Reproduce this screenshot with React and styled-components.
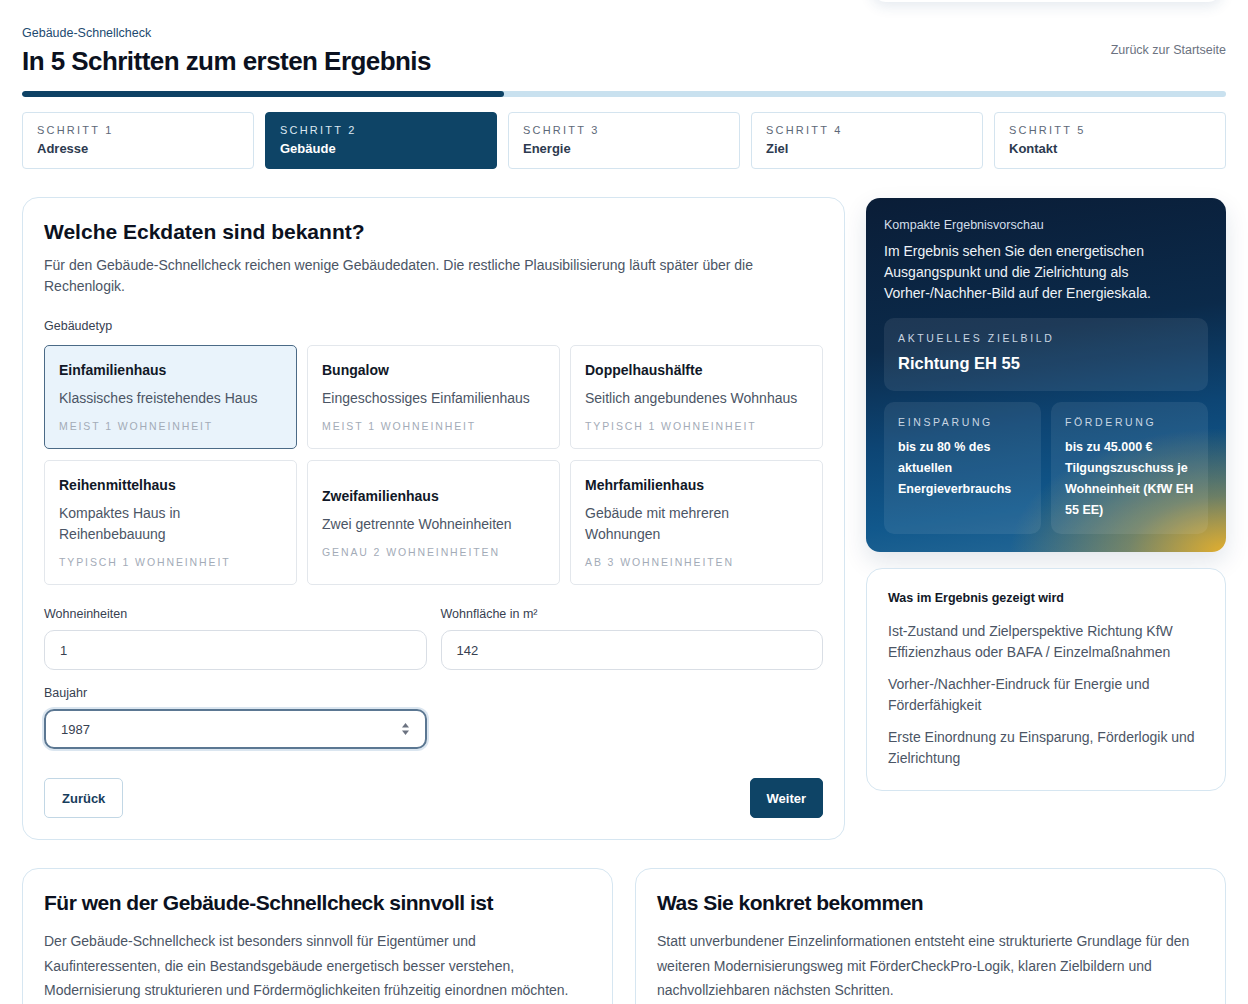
import React from 'react';
import styled, { createGlobalStyle } from 'styled-components';

const GlobalStyle = createGlobalStyle`
    * { box-sizing: border-box; }
    body {
        margin: 0;
        background: #ffffff;
        font-family: 'Liberation Sans', Arial, sans-serif;
        color: #111827;
    }
`;

const Page = styled.div`
    position: relative;
    padding: 26px 22px 40px;
    overflow: hidden;
`;

const FloatingBar = styled.div`
    position: absolute;
    top: -60px;
    right: 26px;
    width: 350px;
    height: 62px;
    border-radius: 14px;
    background: #fff;
    box-shadow: 0 4px 14px rgba(30, 70, 120, 0.12);
`;

const Header = styled.header`
    display: flex;
    justify-content: space-between;
    align-items: flex-start;
`;

const Eyebrow = styled.div`
    font-size: 12.5px;
    color: #1d4a70;
    margin-bottom: 6px;
`;

const Title = styled.h1`
    margin: 0;
    font-size: 26px;
    font-weight: 700;
    letter-spacing: -0.55px;
    color: #0b1120;
`;

const BackLink = styled.a`
    margin-top: 17px;
    font-size: 12.5px;
    color: #6b7280;
    text-decoration: none;
`;

const Progress = styled.div`
    margin-top: 14px;
    height: 6px;
    border-radius: 3px;
    background: #c9e1ef;
    overflow: hidden;
`;

const ProgressFill = styled.div`
    height: 100%;
    border-radius: 3px;
    background: #0e4265;
`;

const Steps = styled.div`
    display: grid;
    grid-template-columns: repeat(5, 1fr);
    gap: 11px;
    margin-top: 15px;
`;

const Step = styled.div`
    height: 57px;
    padding: 11px 14px 12px;
    border-radius: 4px;
    border: 1px solid ${({ $active }) => ($active ? '#0e4466' : '#d4e4ef')};
    background: ${({ $active }) => ($active ? '#0e4466' : '#fff')};
`;

const StepLabel = styled.div`
    font-size: 11px;
    letter-spacing: 0.2em;
    color: ${({ $active }) => ($active ? '#dbe7f1' : '#5d6878')};
`;

const StepName = styled.div`
    margin-top: 5px;
    font-size: 13px;
    font-weight: 700;
    color: ${({ $active }) => ($active ? '#ffffff' : '#2d3a4f')};
`;

const Layout = styled.div`
    display: grid;
    grid-template-columns: 823px 1fr;
    gap: 21px;
    margin-top: 28px;
    align-items: start;
`;

const Card = styled.section`
    border: 1px solid #d6e6f1;
    border-radius: 16px;
    background: #fff;
    padding: ${({ $pad }) => $pad || '22px 21px'};
`;

const CardHeading = styled.h2`
    margin: 0;
    font-size: 21px;
    font-weight: 700;
    letter-spacing: ${({ $tight }) => ($tight ? '-0.5px' : '0')};
    color: #0b1120;
`;

const Lead = styled.p`
    margin: 11px 0 0;
    font-size: 14px;
    line-height: 21px;
    color: #4b5565;
`;

const FieldLabel = styled.div`
    font-size: 12.5px;
    color: #374151;
    margin: ${({ $top }) => $top || '0'} 0 ${({ $bottom }) => $bottom || '9px'};
`;

const TypeGrid = styled.div`
    display: grid;
    grid-template-columns: repeat(3, 1fr);
    gap: 11px 10px;
`;

const TypeCard = styled.div`
    display: flex;
    flex-direction: column;
    justify-content: center;
    min-height: 103px;
    padding: 16px 14px;
    border-radius: 5px;
    border: ${({ $selected }) => ($selected ? '1.5px solid #4b6a86' : '1px solid #e3e7ec')};
    background: ${({ $selected }) => ($selected ? '#e9f3fb' : '#fff')};
`;

const TypeTitle = styled.div`
    font-size: 14px;
    font-weight: 700;
    color: #111827;
`;

const TypeDesc = styled.div`
    margin-top: 10px;
    font-size: 14px;
    line-height: 21px;
    color: #4b5565;
`;

const TypeMeta = styled.div`
    margin-top: 11px;
    font-size: 10.5px;
    letter-spacing: 0.18em;
    color: #a3abb7;
`;

const FieldRow = styled.div`
    display: grid;
    grid-template-columns: 1fr 1fr;
    gap: 14px;
    margin-top: 22px;
`;

const Field = styled.div`
    display: flex;
    flex-direction: column;
`;

const Input = styled.div`
    display: flex;
    align-items: center;
    justify-content: space-between;
    height: 40px;
    padding: 0 15px;
    border-radius: 10px;
    border: ${({ $focus }) => ($focus ? '2px solid #5b7792' : '1px solid #d9dee5')};
    box-shadow: ${({ $focus }) => ($focus ? '0 0 0 2px #dbe6f0' : 'none')};
    font-size: 13px;
    color: #374151;
`;

const HalfField = styled(Field)`
    width: calc(50% - 7px);
    margin-top: 16px;
`;

const Actions = styled.div`
    display: flex;
    justify-content: space-between;
    margin-top: 29px;
`;

const Button = styled.button`
    height: 40px;
    padding: 0 ${({ $primary }) => ($primary ? '16px' : '17px')};
    border-radius: 5px;
    font-family: inherit;
    font-size: 13px;
    font-weight: 700;
    border: 1px solid ${({ $primary }) => ($primary ? '#0e4466' : '#c2d7e5')};
    background: ${({ $primary }) => ($primary ? '#0e4466' : '#fff')};
    color: ${({ $primary }) => ($primary ? '#fff' : '#173d5c')};
`;

const Side = styled.aside`
    display: flex;
    flex-direction: column;
    gap: 16px;
    padding-top: 1px;
`;

const Preview = styled.div`
    border-radius: 14px;
    padding: 20px 18px 18px;
    color: #fff;
    background:
        radial-gradient(ellipse 60% 35% at 100% 100%, rgba(236, 178, 40, 0.95) 0%, rgba(236, 178, 40, 0.4) 45%, rgba(236, 178, 40, 0) 100%),
        linear-gradient(172deg, #0a1d37 0%, #0b2a4a 38%, #0d4574 62%, #11588c 82%, #2a6c98 100%);
    box-shadow: 0 10px 24px rgba(15, 50, 90, 0.12);
`;

const PreviewKicker = styled.div`
    font-size: 12.5px;
    color: #d3deea;
`;

const PreviewText = styled.p`
    margin: 9px 0 0;
    font-size: 14px;
    line-height: 21px;
    color: #eef3f8;
`;

const Tile = styled.div`
    border-radius: 10px;
    background: rgba(255, 255, 255, 0.08);
    padding: ${({ $pad }) => $pad || '14px'};
    margin-top: ${({ $top }) => $top || '0'};
`;

const TileLabel = styled.div`
    font-size: 10.5px;
    letter-spacing: 0.25em;
    color: #c9d6e3;
`;

const TileValue = styled.div`
    margin-top: 10px;
    font-size: 16.5px;
    font-weight: 700;
`;

const TileText = styled.div`
    margin-top: 9px;
    font-size: 12.5px;
    line-height: 21px;
    font-weight: 700;
`;

const TileGrid = styled.div`
    display: grid;
    grid-template-columns: 1fr 1fr;
    gap: 10px;
    margin-top: 11px;
`;

const ListTitle = styled.div`
    font-size: 12.5px;
    font-weight: 700;
    color: #111827;
`;

const List = styled.ul`
    list-style: none;
    margin: 16px 0 0;
    padding: 0;
    display: flex;
    flex-direction: column;
    gap: 11px;
`;

const ListItem = styled.li`
    font-size: 14px;
    line-height: 21px;
    color: #4b5565;
`;

const Bottom = styled.div`
    display: grid;
    grid-template-columns: 1fr 1fr;
    gap: 22px;
    margin-top: 28px;
`;

const BottomText = styled.p`
    margin: 14px 0 0;
    font-size: 14px;
    line-height: 24.5px;
    color: #4b5565;
`;

const steps = ['Adresse', 'Gebäude', 'Energie', 'Ziel', 'Kontakt'];

const types = [
    { title: 'Einfamilienhaus', desc: 'Klassisches freistehendes Haus', meta: 'Meist 1 Wohneinheit', selected: true },
    { title: 'Bungalow', desc: 'Eingeschossiges Einfamilienhaus', meta: 'Meist 1 Wohneinheit' },
    { title: 'Doppelhaushälfte', desc: 'Seitlich angebundenes Wohnhaus', meta: 'Typisch 1 Wohneinheit' },
    { title: 'Reihenmittelhaus', desc: 'Kompaktes Haus in Reihenbebauung', meta: 'Typisch 1 Wohneinheit' },
    { title: 'Zweifamilienhaus', desc: 'Zwei getrennte Wohneinheiten', meta: 'Genau 2 Wohneinheiten' },
    { title: 'Mehrfamilienhaus', desc: 'Gebäude mit mehreren Wohnungen', meta: 'Ab 3 Wohneinheiten' },
];

function Spinner() {
    return (
        <svg width="9" height="14" viewBox="0 0 9 14">
            <path d="M4.5 1 L8 5.5 H1 Z" fill="#6b7280" />
            <path d="M4.5 13 L8 8.5 H1 Z" fill="#6b7280" />
        </svg>
    );
}

function App() {
    return (
        <Page>
            <GlobalStyle />
            <FloatingBar />
            <Header>
                <div>
                    <Eyebrow>Gebäude-Schnellcheck</Eyebrow>
                    <Title>In 5 Schritten zum ersten Ergebnis</Title>
                </div>
                <BackLink href="#">Zurück zur Startseite</BackLink>
            </Header>

            <Progress>
                <ProgressFill style={{ width: `${(2 / 5) * 100}%` }} />
            </Progress>

            <Steps>
                {steps.map((name, i) => (
                    <Step key={name} $active={i === 1}>
                        <StepLabel $active={i === 1}>SCHRITT {i + 1}</StepLabel>
                        <StepName $active={i === 1}>{name}</StepName>
                    </Step>
                ))}
            </Steps>

            <Layout>
                <Card $pad="22px 21px 21px">
                    <CardHeading>Welche Eckdaten sind bekannt?</CardHeading>
                    <Lead>
                        Für den Gebäude-Schnellcheck reichen wenige Gebäudedaten. Die restliche Plausibilisierung läuft später über die Rechenlogik.
                    </Lead>

                    <FieldLabel $top="22px" $bottom="12px">Gebäudetyp</FieldLabel>
                    <TypeGrid>
                        {types.map((t) => (
                            <TypeCard key={t.title} $selected={t.selected}>
                                <TypeTitle>{t.title}</TypeTitle>
                                <TypeDesc>{t.desc}</TypeDesc>
                                <TypeMeta>{t.meta.toUpperCase()}</TypeMeta>
                            </TypeCard>
                        ))}
                    </TypeGrid>

                    <FieldRow>
                        <Field>
                            <FieldLabel>Wohneinheiten</FieldLabel>
                            <Input>1</Input>
                        </Field>
                        <Field>
                            <FieldLabel>Wohnfläche in m²</FieldLabel>
                            <Input>142</Input>
                        </Field>
                    </FieldRow>

                    <HalfField>
                        <FieldLabel>Baujahr</FieldLabel>
                        <Input $focus>
                            1987
                            <Spinner />
                        </Input>
                    </HalfField>

                    <Actions>
                        <Button>Zurück</Button>
                        <Button $primary>Weiter</Button>
                    </Actions>
                </Card>

                <Side>
                    <Preview>
                        <PreviewKicker>Kompakte Ergebnisvorschau</PreviewKicker>
                        <PreviewText>
                            Im Ergebnis sehen Sie den energetischen Ausgangspunkt und die Zielrichtung als Vorher-/Nachher-Bild auf der Energieskala.
                        </PreviewText>
                        <Tile $pad="14px 14px 18px" $top="14px">
                            <TileLabel>AKTUELLES ZIELBILD</TileLabel>
                            <TileValue>Richtung EH 55</TileValue>
                        </Tile>
                        <TileGrid>
                            <Tile $pad="14px 14px 13px">
                                <TileLabel>EINSPARUNG</TileLabel>
                                <TileText>bis zu 80 % des aktuellen Energieverbrauchs</TileText>
                            </Tile>
                            <Tile $pad="14px 14px 13px">
                                <TileLabel>FÖRDERUNG</TileLabel>
                                <TileText>bis zu 45.000 € Tilgungszuschuss je Wohneinheit (KfW EH 55 EE)</TileText>
                            </Tile>
                        </TileGrid>
                    </Preview>

                    <Card $pad="22px 21px 21px">
                        <ListTitle>Was im Ergebnis gezeigt wird</ListTitle>
                        <List>
                            <ListItem>Ist-Zustand und Zielperspektive Richtung KfW Effizienzhaus oder BAFA / Einzelmaßnahmen</ListItem>
                            <ListItem>Vorher-/Nachher-Eindruck für Energie und Förderfähigkeit</ListItem>
                            <ListItem>Erste Einordnung zu Einsparung, Förderlogik und Zielrichtung</ListItem>
                        </List>
                    </Card>
                </Side>
            </Layout>

            <Bottom>
                <Card>
                    <CardHeading $tight>Für wen der Gebäude-Schnellcheck sinnvoll ist</CardHeading>
                    <BottomText>
                        Der Gebäude-Schnellcheck ist besonders sinnvoll für Eigentümer und Kaufinteressenten, die ein Bestandsgebäude energetisch besser verstehen, Modernisierung strukturieren und Fördermöglichkeiten frühzeitig einordnen möchten.
                    </BottomText>
                </Card>
                <Card>
                    <CardHeading $tight>Was Sie konkret bekommen</CardHeading>
                    <BottomText>
                        Statt unverbundener Einzelinformationen entsteht eine strukturierte Grundlage für den weiteren Modernisierungsweg mit FörderCheckPro-Logik, klaren Zielbildern und nachvollziehbaren nächsten Schritten.
                    </BottomText>
                </Card>
            </Bottom>
        </Page>
    );
}

export default App;
